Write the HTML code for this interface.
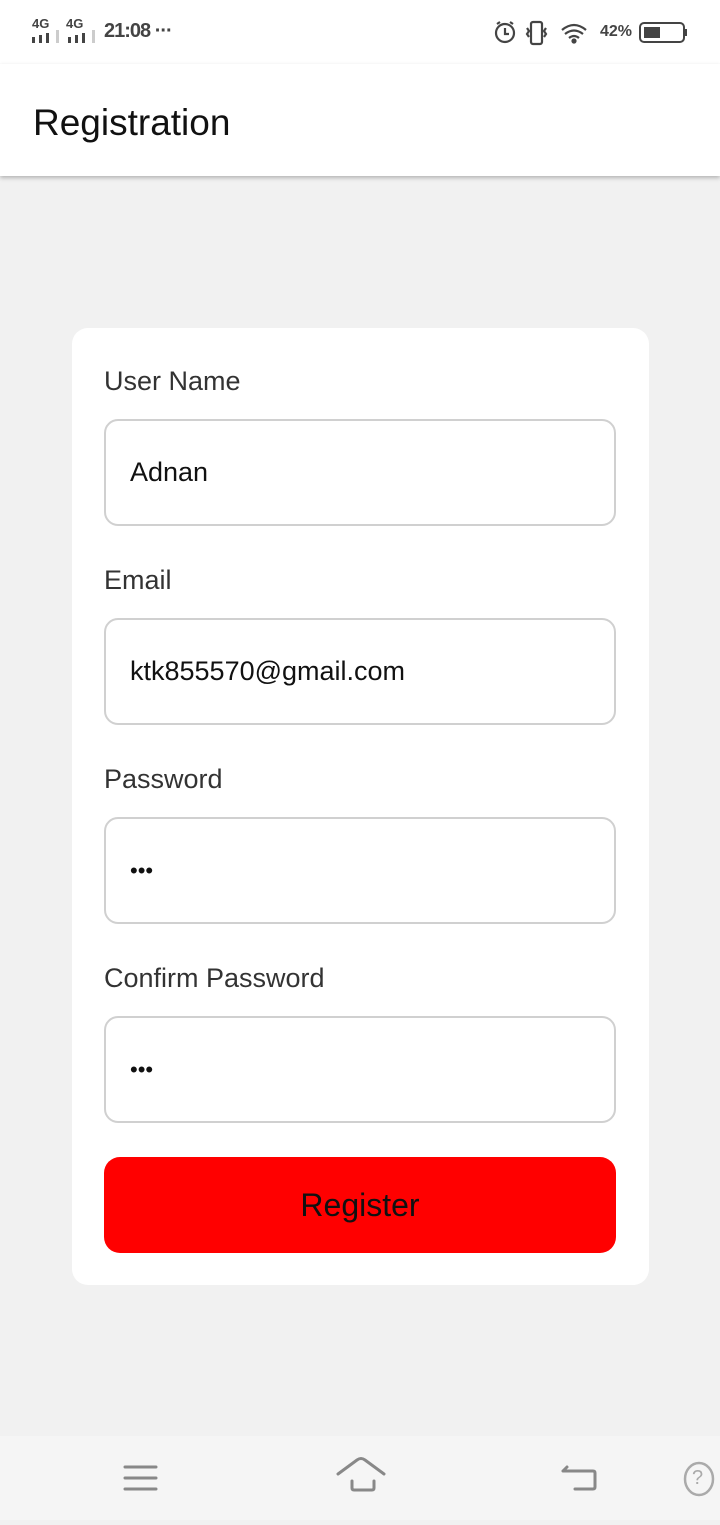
<!DOCTYPE html>
<html><head><meta charset="utf-8"><style>
*{margin:0;padding:0;box-sizing:border-box}
body{width:720px;height:1520px;background:#f1f1f1;font-family:"Liberation Sans",sans-serif;position:relative;overflow:hidden;color:#222}
.sb{position:absolute;top:0;left:0;width:720px;height:64px;background:#fff}
.hdr{position:absolute;top:64px;left:0;width:720px;height:112px;background:#fff;box-shadow:0 2px 4px rgba(0,0,0,.25)}
.hdr span{position:absolute;left:33px;top:38px;font-size:37px;color:#111}
.card{position:absolute;left:72px;top:328px;width:577px;height:957px;background:#fff;border-radius:16px}
.lbl{position:absolute;left:104px;font-size:27px;color:#333}
.inp{position:absolute;left:104px;width:512px;height:107px;border:2px solid #d0d0d0;border-radius:14px;background:#fff;font-size:27px;padding-left:24px;line-height:103px;color:#111}
.btn{position:absolute;left:104px;top:1157px;width:512px;height:96px;background:#ff0000;border-radius:16px;text-align:center;line-height:96px;font-size:32px;color:#111}
.nav{position:absolute;left:0;top:1436px;width:720px;height:84px;background:#f5f5f5}
</style></head><body>
<div class="sb">
<div style="position:absolute;left:32px;top:16px;font-size:13px;font-weight:bold;color:#444">4G</div>
<div style="position:absolute;left:66px;top:16px;font-size:13px;font-weight:bold;color:#444">4G</div>
<svg style="position:absolute;left:32px;top:30px" width="64" height="14"><g fill="#444"><rect x="0" y="7" width="3" height="6"/><rect x="7" y="5" width="3" height="8"/><rect x="14" y="3" width="3" height="10"/><rect x="36" y="7" width="3" height="6"/><rect x="43" y="5" width="3" height="8"/><rect x="50" y="3" width="3" height="10"/></g><rect x="24" y="0" width="3" height="13" fill="#ccc"/><rect x="60" y="0" width="3" height="13" fill="#ccc"/></svg>
<div style="position:absolute;left:104px;top:20px;font-size:20px;font-weight:bold;color:#444;letter-spacing:-1px">21:08 ···</div>
<svg style="position:absolute;left:494px;top:20px" width="196" height="26" fill="none" stroke="#444" stroke-width="2.2">
<circle cx="11" cy="13" r="9"/><path d="M11 8v6h4M3 4l3-2M19 4l-3-2"/>
<rect x="37" y="2" width="11" height="22" rx="2"/><path d="M33 8l2 3-2 3 2 3M52 8l-2 3 2 3-2 3"/>
<path d="M68 10q12-10 24 0M71 14q9-7 18 0M75 18q5-4 10 0"/><circle cx="80" cy="21" r="1.5" fill="#444"/>
<rect x="146" y="3" width="44" height="19" rx="4" stroke-width="2"/><rect x="150" y="7" width="16" height="11" fill="#444" stroke="none"/><rect x="191" y="9" width="2" height="7" fill="#444" stroke="none"/>
</svg>
<div style="position:absolute;left:600px;top:23px;font-size:16px;font-weight:bold;color:#444">42%</div>
</div>
<div class="hdr"><span>Registration</span></div>
<div class="card"></div>
<div class="lbl" style="top:366px">User Name</div>
<div class="inp" style="top:419px">Adnan</div>
<div class="lbl" style="top:565px">Email</div>
<div class="inp" style="top:618px">ktk855570@gmail.com</div>
<div class="lbl" style="top:764px">Password</div>
<div class="inp" style="top:817px;font-size:22px">•••</div>
<div class="lbl" style="top:963px">Confirm Password</div>
<div class="inp" style="top:1016px;font-size:22px">•••</div>
<div class="btn">Register</div>
<div class="nav">
<svg width="720" height="84" fill="none" stroke="#888" stroke-width="3" stroke-linecap="round">
<path d="M125 31h31M125 42h31M125 53h31"/>
<path d="M338 38l19-14q4-3 8 0l19 14M352 45v7q0 2 2 2h18q2 0 2-2v-7"/>
<path d="M563 35h30q2 0 2 2v14q0 2-2 2h-18M563 35l4-4"/>
<ellipse cx="699" cy="43" rx="14" ry="16" stroke="#aaa" stroke-width="2.5"/>
</svg>
<div style="position:absolute;left:692px;top:31px;font-size:20px;color:#aaa">?</div>
</div>
</body></html>
